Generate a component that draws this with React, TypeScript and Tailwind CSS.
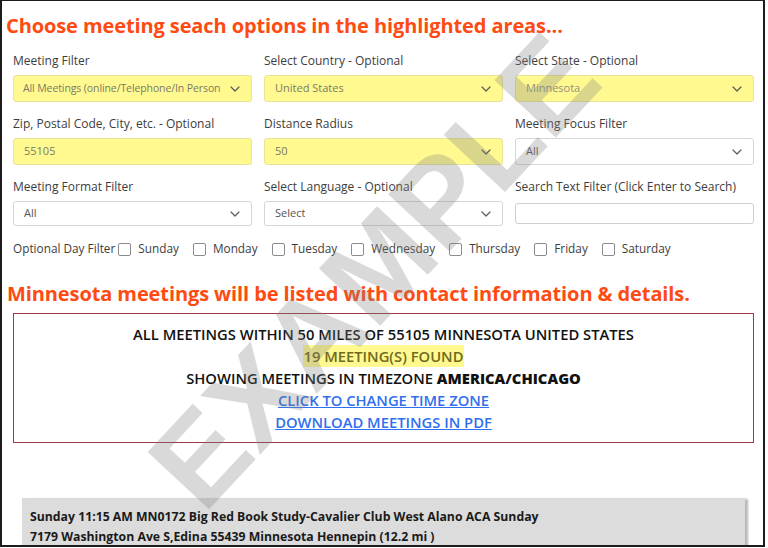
import React from "react";

const font = { fontFamily: '"Open Sans", "Noto Sans", sans-serif' };

function Chevron() {
  return (
    <svg width="10" height="6" viewBox="0 0 10 6" className="shrink-0">
      <path d="M1 1l4 4 4-4" fill="none" stroke="#5a5a5a" strokeWidth="1.2" strokeLinecap="round" strokeLinejoin="round" />
    </svg>
  );
}

function Field({
  label,
  value,
  yellow,
  h,
  chevron = true,
  valueClass = "text-[#7a7a66]",
}: {
  label: string;
  value: string;
  yellow?: boolean;
  h: string;
  chevron?: boolean;
  valueClass?: string;
}) {
  return (
    <div className="flex flex-col">
      <div className="h-[18px] leading-[18px] text-[12px] text-[#3d3d3d] whitespace-nowrap">{label}</div>
      <div
        className={`${h} mt-[5px] flex items-center justify-between gap-[4px] pl-[10px] pr-[11px] rounded-[3px] border ${
          yellow ? "bg-[#fff98f] border-[#e6e39a]" : "bg-white border-[#d6d6d6]"
        }`}
      >
        <span className={`text-[11px] whitespace-nowrap overflow-hidden ${valueClass}`}>{value}</span>
        {chevron && <Chevron />}
      </div>
    </div>
  );
}

export default function App() {
  const days = ["Sunday", "Monday", "Tuesday", "Wednesday", "Thursday", "Friday", "Saturday"];
  return (
    <div className="w-[768px] h-[548px] bg-white overflow-hidden" style={font}>
      <div className="relative w-[765px] h-[547px] border-l-2 border-r-2 border-b-2 border-t border-[#1c1c1c] overflow-hidden bg-white">
        <div className="mt-[11px] ml-[4px] h-[28px] leading-[28px] text-[20px] font-bold text-[#ff4a12] whitespace-nowrap tracking-[-0.1px]">
          Choose meeting seach options in the highlighted areas...
        </div>

        <div className="ml-[11px] w-[741px] mt-[12px] grid grid-cols-3 gap-x-[12px]">
          <div className="flex flex-col">
            <div className="h-[18px] leading-[18px] text-[12px] text-[#3d3d3d] whitespace-nowrap">Meeting Filter</div>
            <div className="h-[27px] mt-[5px] flex items-center justify-between pl-[9px] pr-[11px] rounded-[3px] border bg-[#fff98f] border-[#e6e39a]">
              <span className="text-[10.5px] whitespace-nowrap text-[#7a7a66] tracking-[-0.1px]">
                All Meetings (online/Telephone/In Person
              </span>
              <Chevron />
            </div>
          </div>
          <Field label="Select Country - Optional" value="United States" yellow h="h-[27px]" />
          <Field label="Select State - Optional" value="Minnesota" yellow h="h-[27px]" valueClass="text-[#8f8f80]" />
        </div>
        <div className="ml-[11px] w-[741px] mt-[13px] grid grid-cols-3 gap-x-[12px]">
          <Field label="Zip, Postal Code, City, etc. - Optional" value="55105" yellow h="h-[27px]" chevron={false} />
          <Field label="Distance Radius" value="50" yellow h="h-[27px]" />
          <Field label="Meeting Focus Filter" value="All" h="h-[27px]" valueClass="text-[#555]" />
        </div>
        <div className="ml-[11px] w-[741px] mt-[13px] grid grid-cols-3 gap-x-[12px] items-start">
          <Field label="Meeting Format Filter" value="All" h="h-[25px]" valueClass="text-[#555]" />
          <Field label="Select Language - Optional" value="Select" h="h-[25px]" valueClass="text-[#555]" />
          <div className="flex flex-col">
            <div className="h-[18px] leading-[18px] text-[12px] text-[#3d3d3d] whitespace-nowrap">
              Search Text Filter (Click Enter to Search)
            </div>
            <div className="h-[21px] mt-[7px] rounded-[3px] border border-[#cfcfcf] bg-white" />
          </div>
        </div>

        <div className="ml-[11px] mt-[14px] h-[18px] flex items-center text-[11.8px] text-[#3d3d3d] whitespace-nowrap">
          <span>Optional Day Filter</span>
          {days.map((d, i) => (
            <div key={d} className={`flex items-center ${i === 0 ? "ml-[3px]" : "ml-[14px]"}`}>
              <span className="w-[13px] h-[13px] rounded-[2px] border border-[#8c8c8c] bg-white" />
              <span className="ml-[7px]">{d}</span>
            </div>
          ))}
        </div>

        <div className="mt-[22px] ml-[5px] h-[28px] leading-[28px] text-[20px] font-bold text-[#ff4a12] whitespace-nowrap tracking-[-0.1px]">
          Minnesota meetings will be listed with contact information &amp; details.
        </div>

        <div className="ml-[11px] mt-[5px] w-[741px] h-[130px] border border-[#9b3946] pt-[9px] flex flex-col items-center text-[14.75px] font-semibold text-[#111] leading-[22px]">
          <div>ALL MEETINGS WITHIN 50 MILES OF 55105 MINNESOTA UNITED STATES</div>
          <div>
            <span className="bg-[#fff98f] text-[#6e6a1e] px-[1px] py-[1px]">19 MEETING(S) FOUND</span>
          </div>
          <div>
            SHOWING MEETINGS IN TIMEZONE <span className="font-extrabold">AMERICA/CHICAGO</span>
          </div>
          <div className="text-[#2f6ff0] underline">CLICK TO CHANGE TIME ZONE</div>
          <div className="text-[#2f6ff0] underline">DOWNLOAD MEETINGS IN PDF</div>
        </div>

        <div className="ml-[20px] mt-[55px] w-[723px] h-[80px] bg-[#dcdcdc] shadow-[3px_1px_2px_rgba(0,0,0,0.28)] pl-[8px] pt-[9px] text-[12.25px] font-bold text-[#1a1a1a] leading-[20px]">
          <div>Sunday 11:15 AM MN0172 Big Red Book Study-Cavalier Club West Alano ACA Sunday</div>
          <div>7179 Washington Ave S,Edina 55439 Minnesota Hennepin (12.2 mi )</div>
        </div>

        <div
          className="pointer-events-none absolute left-[372px] top-[270px] -translate-x-1/2 -translate-y-1/2 -rotate-[47deg] text-[122px] font-bold leading-none text-[rgba(130,130,130,0.3)] whitespace-nowrap"
          style={{ fontFamily: '"Liberation Sans", Arial, sans-serif' }}
        >
          EXAMPLE
        </div>
      </div>
    </div>
  );
}
